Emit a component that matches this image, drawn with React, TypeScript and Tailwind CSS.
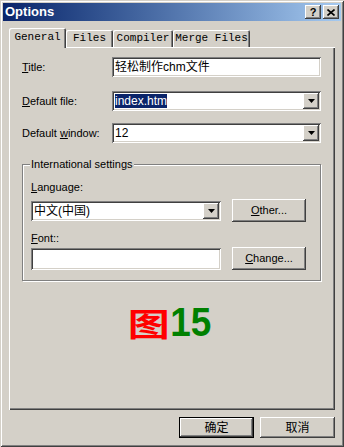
import React from 'react';

const raised =
  'shadow-[inset_-1px_-1px_#404040,inset_1px_1px_#ffffff,inset_-2px_-2px_#808080,inset_2px_2px_#d4d0c8]';
const sunken =
  'shadow-[inset_1px_1px_#808080,inset_-1px_-1px_#ffffff,inset_2px_2px_#404040,inset_-2px_-2px_#d4d0c8]';
const ui = "font-['Liberation_Sans','Noto_Sans_CJK_SC',sans-serif]";
const mono = "font-['Liberation_Mono',monospace]";

const Mn: React.FC<{ children: React.ReactNode }> = ({ children }) => <span className="underline underline-offset-1">{children}</span>;

const Arrow = () => (
  <div className={`w-[16px] h-[16px] bg-[#d4d0c8] flex items-center justify-center ${raised}`}>
    <svg width="7" height="4" viewBox="0 0 7 4">
      <path d="M0 0h7L3.5 4z" fill="#000" />
    </svg>
  </div>
);

const Combo: React.FC<{ children: React.ReactNode; w: string }> = ({ children, w }) => (
  <div className={`${w} h-[20px] bg-white flex items-center pl-[3px] pr-[2px] ${sunken}`}>
    <div className="flex-1 text-[12px] leading-none">{children}</div>
    <Arrow />
  </div>
);

const Btn: React.FC<{ children: React.ReactNode; w: string; h: string; def?: boolean }> = ({ children, w, h, def }) => (
  <div className={`${w} ${h} flex items-center justify-center text-[12px] ${def ? 'border border-black' : ''}`}>
    <div className={`w-full h-full flex items-center justify-center bg-[#d4d0c8] ${raised}`}>{children}</div>
  </div>
);

const tabs = [
  { label: 'General', w: 'w-[57px]' },
  { label: 'Files', w: 'w-[47px]' },
  { label: 'Compiler', w: 'w-[60px]' },
  { label: 'Merge Files', w: 'w-[77px]' },
];

export default function App() {
  return (
    <div
      className={`w-[344px] h-[447px] bg-[#d4d0c8] flex flex-col text-black ${ui} shadow-[inset_1px_1px_#d4d0c8,inset_-1px_-1px_#404040,inset_2px_2px_#ffffff,inset_-2px_-2px_#808080]`}
    >
      {/* title bar */}
      <div className="mx-[3px] mt-[3px] h-[18px] bg-gradient-to-r from-[#0a246a] to-[#a6caf0] flex items-center pl-[2px] pr-[2px]">
        <span className="flex-1 text-white font-bold text-[13px]">Options</span>
        <div className={`w-[16px] h-[14px] bg-[#d4d0c8] ${raised} flex items-center justify-center text-[11px] font-bold leading-none`}>?</div>
        <div className={`w-[16px] h-[14px] ml-[2px] bg-[#d4d0c8] ${raised} flex items-center justify-center`}>
          <svg width="8" height="7" viewBox="0 0 8 7">
            <path d="M0.5 0.5L7.5 6.5M7.5 0.5L0.5 6.5" stroke="#000" strokeWidth="1.6" />
          </svg>
        </div>
      </div>

      {/* tabs */}
      <div className="mx-[9px] mt-[7px] flex flex-col">
        <div className="flex items-end h-[19px] relative z-10">
          {tabs.map((t, i) => (
            <div
              key={t.label}
              className={`${t.w} ${i === 0 ? 'h-[20px] -mb-px pb-[2px]' : 'h-[17px]'} rounded-t-[2px] bg-[#d4d0c8] flex items-center justify-center ${mono} text-[11px] shadow-[inset_1px_1px_#ffffff,inset_-1px_0_#404040,inset_-2px_0_#808080]`}
            >
              {t.label}
            </div>
          ))}
        </div>

        {/* panel */}
        <div className="h-[363px] flex flex-col pl-[13px] pr-[14px] pt-[10px] shadow-[inset_1px_1px_#ffffff,inset_-1px_-1px_#404040,inset_-2px_-2px_#808080]">
          <div className="flex items-center h-[20px]">
            <div className="w-[90px] text-[11px]"><Mn>T</Mn>itle:</div>
            <div className={`w-[209px] h-[20px] bg-white flex items-center pl-[3px] text-[12px] ${sunken}`}>轻松制作chm文件</div>
          </div>
          <div className="flex items-center mt-[14px]">
            <div className="w-[90px] text-[11px]"><Mn>D</Mn>efault file:</div>
            <Combo w="w-[209px]">
              <span className="bg-[#0a246a] text-white">index.htm</span>
            </Combo>
          </div>
          <div className="flex items-center mt-[12px]">
            <div className="w-[90px] text-[11px]">Default <Mn>w</Mn>indow:</div>
            <Combo w="w-[209px]">12</Combo>
          </div>

          {/* group box */}
          <div className="relative mt-[21px] w-[299px] h-[117px] border border-[#808080] shadow-[1px_1px_#ffffff,inset_1px_1px_#ffffff] pl-[8px] pt-[15px]">
            <span className="absolute -top-[8px] left-[7px] px-[1px] bg-[#d4d0c8] text-[11px] leading-[14px]">International settings</span>
            <div className="text-[11px] leading-[14px]"><Mn>L</Mn>anguage:</div>
            <div className="flex items-center mt-[5px]">
              <Combo w="w-[190px]">中文(中国)</Combo>
              <div className="ml-[11px]">
                <Btn w="w-[74px]" h="h-[23px]"><span className="text-[11px]"><Mn>O</Mn>ther...</span></Btn>
              </div>
            </div>
            <div className="text-[11px] leading-[14px] mt-[9px]"><Mn>F</Mn>ont::</div>
            <div className="flex items-center mt-[2px]">
              <div className={`w-[190px] h-[22px] bg-white ${sunken}`} />
              <div className="ml-[11px]">
                <Btn w="w-[74px]" h="h-[23px]"><span className="text-[11px]"><Mn>C</Mn>hange...</span></Btn>
              </div>
            </div>
          </div>

          <div className="flex items-center justify-center mt-[26px] pr-[2px] h-[30px]">
            <span className="text-[#ff0000] font-bold text-[42px] leading-none font-['Noto_Sans_CJK_SC',sans-serif] scale-y-[0.75] -mr-[2px]">图</span>
            <span className="text-[#008000] font-bold text-[41px] leading-none font-['Liberation_Sans',sans-serif] scale-x-[0.9]">15</span>
          </div>
        </div>
      </div>

      {/* bottom buttons */}
      <div className="flex justify-end mt-[7px] pr-[9px] gap-[6px]">
        <Btn w="w-[75px]" h="h-[21px]" def>确定</Btn>
        <Btn w="w-[75px]" h="h-[21px]">取消</Btn>
      </div>
    </div>
  );
}
